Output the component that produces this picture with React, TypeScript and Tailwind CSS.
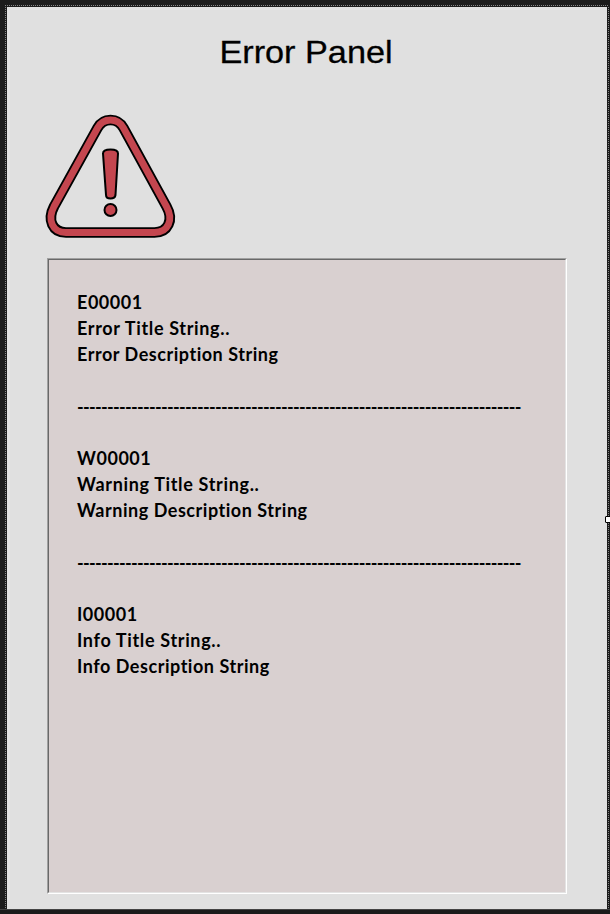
const DIVIDER = "-".repeat(74);

const messages = [
  { code: "E00001", title: "Error Title String..", description: "Error Description String" },
  { code: "W00001", title: "Warning Title String..", description: "Warning Description String" },
  { code: "I00001", title: "Info Title String..", description: "Info Description String" },
];

const OUTLINE =
  "M51.500 13C54.500 7.500 58.500 5 64.500 5S74.500 7.500 77.500 13L120.500 91.500C128 105 122 117.500 108.500 117.500H20C6.500 117.500 1 105 8 91.500Z";

function WarningIcon() {
  return (
    <svg width="130" height="124" viewBox="0 0 130 124" className="block overflow-visible" aria-hidden="true">
      <g strokeLinejoin="round" fill="none">
        <path d={OUTLINE} stroke="#000" strokeWidth="10.600" />
        <path d={OUTLINE} stroke="#c4464f" strokeWidth="6.800" />
      </g>
      <path d="M57 38.500Q57 34.500 64.500 34.500T72 38.500L69.500 80Q69 83.500 64.500 83.500T60 80Z" fill="#c4464f" stroke="#000" strokeWidth="2" />
      <circle cx="64.500" cy="95" r="6" fill="#c4464f" stroke="#000" strokeWidth="2" />
    </svg>
  );
}

export default function App() {
  return (
    <div className="relative flex h-[914px] w-[610px] flex-col overflow-hidden bg-[#1b1b1b]">
      <div className="flex h-[7px] shrink-0 pt-[5px] pr-px pl-[5px]">
        <div className="h-px flex-1 bg-[repeating-linear-gradient(90deg,#858585_0_1px,#1b1b1b_1px_2px)]" />
      </div>
      <div className="flex h-[902px] shrink-0">
        <div className="flex w-[7px] shrink-0 pl-[5px]">
          <div className="w-px bg-[repeating-linear-gradient(180deg,#858585_0_1px,#1b1b1b_1px_2px)]" />
        </div>
        <main className="flex flex-1 flex-col bg-[#e0e0e0] px-10 pt-[25px] pb-[15px] text-black">
          <h1 className="h-[40px] origin-center -translate-x-[1px] scale-x-[1.07] text-center font-['Liberation_Sans',sans-serif] text-[32px] leading-[40px] [-webkit-text-stroke:0.3px_black]">
            Error Panel
          </h1>
          <div className="-ml-px flex flex-1 items-end pb-[19px]">
            <WarningIcon />
          </div>
          <section className="h-[636px] shrink-0 border border-t-[#a0a0a0] border-r-white border-b-white border-l-[#a0a0a0]">
            <div className="h-full border border-t-[#696969] border-r-[#e3e3e3] border-b-[#e3e3e3] border-l-[#696969] bg-[#d9d0d0] pt-[29px] pl-[28px] font-['Lato',sans-serif] text-[18px] leading-[26px] font-bold tracking-[0.53px] whitespace-nowrap [font-variant-ligatures:none]">
              {messages.map((m, i) => (
                <div key={m.code}>
                  {i > 0 && <p className="h-[78px] pt-[27px] tracking-[-0.717px]">{DIVIDER}</p>}
                  <p>{m.code}</p>
                  <p className="tracking-[0.66px]">{m.title}</p>
                  <p>{m.description}</p>
                </div>
              ))}
            </div>
          </section>
        </main>
        <div className="flex w-[3px] shrink-0 pl-px">
          <div className="w-px bg-[repeating-linear-gradient(180deg,#858585_0_1px,#1b1b1b_1px_2px)]" />
        </div>
      </div>
      <div className="flex-1 border-t border-[#444]" />
      <div className="absolute top-[516px] -right-[2px] size-[7px] rounded-[1px] border border-black bg-white" />
    </div>
  );
}
